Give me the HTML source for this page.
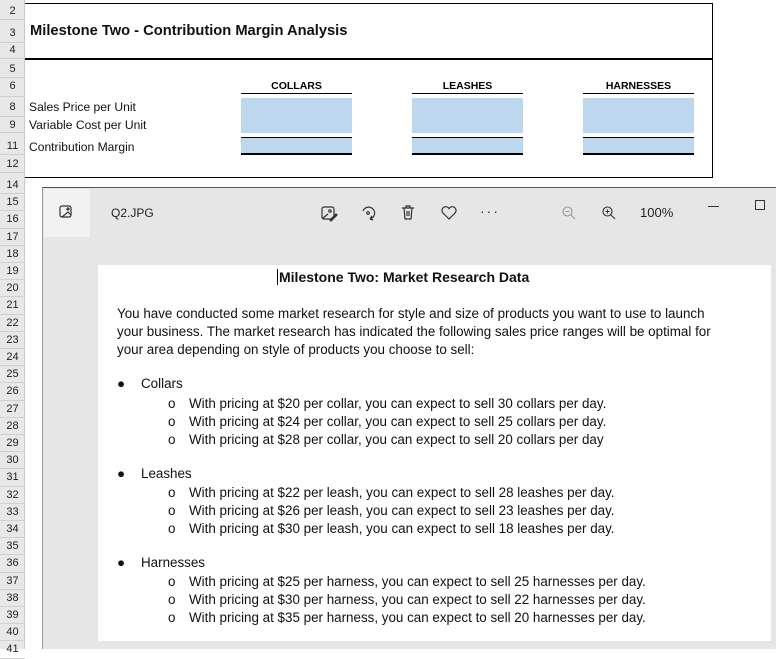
<!DOCTYPE html>
<html><head><meta charset="utf-8"><style>
*{margin:0;padding:0;box-sizing:border-box}
body{width:776px;height:649px;overflow:hidden;background:#fff;font-family:"Liberation Sans",sans-serif;position:relative}
.rn{position:absolute;left:0;width:25px;background:#e8e8e8;border-right:1px solid #c8c8c8;top:0;height:649px}
.r{position:absolute;left:0;width:25px;font-size:11px;color:#222;text-align:center;border-bottom:1px solid #d0d0d0}
.a{position:absolute}
.t{position:absolute;font-size:12.1px;color:#111;white-space:nowrap}
.hd{position:absolute;font-size:10.5px;font-weight:bold;text-align:center;border-bottom:1.5px solid #000;height:14px}
.bl{position:absolute;background:#bdd7ee}
.doc{position:absolute;left:98px;top:265px;width:673px;height:376px;background:#fff;font-size:13.4px;color:#111}
.doc div{position:absolute;white-space:nowrap}
</style></head><body>
<div class="rn"></div>
<div class="r" style="top:3px;height:17px;line-height:17px">2</div>
<div class="r" style="top:20px;height:23px;line-height:26px">3</div>
<div class="r" style="top:43px;height:16px;line-height:14px">4</div>
<div class="r" style="top:59px;height:19px;line-height:20px">5</div>
<div class="r" style="top:78px;height:19px;line-height:17px">6</div>
<div class="r" style="top:97px;height:20px;line-height:20px">8</div>
<div class="r" style="top:117px;height:16px;line-height:16px">9</div>
<div class="r" style="top:133px;height:22px;line-height:26px">11</div>
<div class="r" style="top:155px;height:18px;line-height:18px">12</div>
<div id="rows"></div>
<script>
var h='';var y=177;for(var i=14;i<=41;i++){h+='<div class="r" style="top:'+y+'px;height:17.2px;line-height:17px">'+i+'</div>';y+=17.2;}
document.getElementById('rows').innerHTML=h;
</script>
<div class="a" style="left:25px;top:3px;width:688px;height:175px;border:1px solid #000;border-left:none"></div>
<div class="a" style="left:25px;top:58px;width:688px;height:2px;background:#000"></div>
<div class="t" style="left:30px;top:23px;font-size:14.7px;font-weight:bold">Milestone Two - Contribution Margin Analysis</div>
<div class="t" style="left:29px;top:100px">Sales Price per Unit</div>
<div class="t" style="left:29px;top:118px">Variable Cost per Unit</div>
<div class="t" style="left:29px;top:140px">Contribution Margin</div>
<div class="hd" style="left:241px;top:80px;width:111px">COLLARS</div>
<div class="hd" style="left:412px;top:80px;width:111px">LEASHES</div>
<div class="hd" style="left:583px;top:80px;width:111px">HARNESSES</div>
<div class="bl" style="left:241px;top:98px;width:111px;height:35px"></div>
<div class="bl" style="left:412px;top:98px;width:111px;height:35px"></div>
<div class="bl" style="left:583px;top:98px;width:111px;height:35px"></div>
<div class="bl" style="left:241px;top:137px;width:111px;height:18px;border-top:1px solid #000;border-bottom:2px solid #000"></div>
<div class="bl" style="left:412px;top:137px;width:111px;height:18px;border-top:1px solid #000;border-bottom:2px solid #000"></div>
<div class="bl" style="left:583px;top:137px;width:111px;height:18px;border-top:1px solid #000;border-bottom:2px solid #000"></div>

<div class="a" style="left:42px;top:187px;width:734px;height:462px;background:#e6e6e6;border-top:1px solid #555;border-left:1px solid #999"></div>
<div class="a" style="left:44px;top:189px;width:46px;height:48px;background:#f2f2f2"></div>
<svg class="a" style="left:58px;top:204px" width="16" height="16" viewBox="0 0 16 16" fill="none" stroke="#333" stroke-width="1.2"><rect x="2" y="2" width="11" height="11" rx="2"/><path d="M4 13 L10 8 L13 11"/><circle cx="10" cy="5" r="1"/></svg>
<div class="t" style="left:111px;top:206px;font-size:12px;color:#222">Q2.JPG</div>
<svg class="a" style="left:320px;top:204px" width="18" height="18" viewBox="0 0 18 18" fill="none" stroke="#333" stroke-width="1.2"><rect x="2" y="3" width="12" height="12" rx="2"/><path d="M3 14 L8 10"/><circle cx="10" cy="7" r="1.2"/><path d="M10 16 L16 10 L17 11 L11 17 Z" fill="#333"/></svg>
<svg class="a" style="left:360px;top:204px" width="18" height="18" viewBox="0 0 18 18" fill="none" stroke="#333" stroke-width="1.2"><path d="M3 7 A6 6 0 1 1 10 15"/><path d="M10 15 L12 12 M10 15 L13 16"/><circle cx="8" cy="9" r="1.3"/></svg>
<svg class="a" style="left:400px;top:204px" width="16" height="18" viewBox="0 0 16 18" fill="none" stroke="#333" stroke-width="1.2"><path d="M2 4 H14 M6 4 V2 H10 V4 M4 4 L5 15 H11 L12 4 M7 7 V12 M9 7 V12"/></svg>
<svg class="a" style="left:440px;top:205px" width="18" height="16" viewBox="0 0 18 16" fill="none" stroke="#333" stroke-width="1.2"><path d="M9 14 L2.5 7.5 A3.5 3.5 0 0 1 9 3.5 A3.5 3.5 0 0 1 15.5 7.5 Z"/></svg>
<div class="t" style="left:480px;top:203px;font-size:14px;color:#333;letter-spacing:2px">···</div>
<svg class="a" style="left:561px;top:205px" width="16" height="16" viewBox="0 0 16 16" fill="none" stroke="#999" stroke-width="1.1"><circle cx="6.5" cy="6.5" r="4.5"/><path d="M10 10 L14 14 M4.5 6.5 H8.5"/></svg>
<svg class="a" style="left:601px;top:205px" width="16" height="16" viewBox="0 0 16 16" fill="none" stroke="#333" stroke-width="1.1"><circle cx="6.5" cy="6.5" r="4.5"/><path d="M10 10 L14 14 M4.5 6.5 H8.5 M6.5 4.5 V8.5"/></svg>
<div class="t" style="left:640px;top:205px;font-size:13px;color:#222">100%</div>
<div class="a" style="left:708px;top:206px;width:11px;height:1px;background:#333"></div>
<div class="a" style="left:755px;top:200px;width:10px;height:10px;border:1px solid #333"></div>

<div class="doc">
<div style="left:179px;top:4px;font-weight:bold;font-size:14px;border-left:1px solid #000;padding-left:1px">Milestone Two: Market Research Data</div>
<div style="left:19px;top:40px;line-height:18px">You have conducted some market research for style and size of products you want to use to launch<br>your business. The market research has indicated the following sales price ranges will be optimal for<br>your area depending on style of products you choose to sell:</div>
<div style="left:19px;top:111px">●</div><div style="left:43px;top:111px">Collars</div>
<div style="left:70px;top:130px;line-height:18px">o<br>o<br>o</div>
<div style="left:91px;top:130px;line-height:18px">With pricing at $20 per collar, you can expect to sell 30 collars per day.<br>With pricing at $24 per collar, you can expect to sell 25 collars per day.<br>With pricing at $28 per collar, you can expect to sell 20 collars per day</div>
<div style="left:19px;top:201px">●</div><div style="left:43px;top:201px">Leashes</div>
<div style="left:70px;top:219px;line-height:18px">o<br>o<br>o</div>
<div style="left:91px;top:219px;line-height:18px">With pricing at $22 per leash, you can expect to sell 28 leashes per day.<br>With pricing at $26 per leash, you can expect to sell 23 leashes per day.<br>With pricing at $30 per leash, you can expect to sell 18 leashes per day.</div>
<div style="left:19px;top:290px">●</div><div style="left:43px;top:290px">Harnesses</div>
<div style="left:70px;top:308px;line-height:18px">o<br>o<br>o</div>
<div style="left:91px;top:308px;line-height:18px">With pricing at $25 per harness, you can expect to sell 25 harnesses per day.<br>With pricing at $30 per harness, you can expect to sell 22 harnesses per day.<br>With pricing at $35 per harness, you can expect to sell 20 harnesses per day.</div>
</div>
</body></html>
